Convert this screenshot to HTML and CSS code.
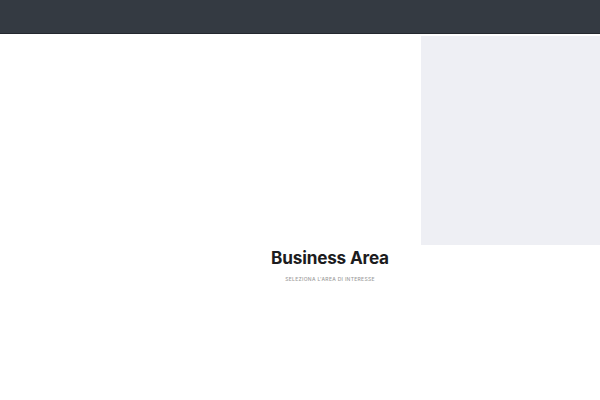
FILE: index.html
```html
<!DOCTYPE html>
<html lang="it">
<head>
<meta charset="utf-8">
<title>Business Area</title>
<link rel="stylesheet" href="styles.css">
</head>
<body>
<header class="topbar"></header>
<div class="hero-row">
  <div class="hero-panel"></div>
</div>
<section class="intro">
  <h1 class="intro-title">Business Area</h1>
  <p class="intro-sub">Seleziona l'area di interesse</p>
</section>
</body>
</html>
```
FILE: styles.css
```css
html, body {
  margin: 0;
  padding: 0;
  background: #ffffff;
  font-family: Inter, "Noto Sans", sans-serif;
}
.topbar {
  height: 33px;
  background: #343a42;
  border-bottom: 1px solid #24282e;
}
.hero-row {
  display: flex;
  justify-content: flex-end;
  padding-top: 2px;
}
.hero-panel {
  width: 179px;
  height: 209px;
  background: #eeeff4;
}
.intro {
  display: flex;
  flex-direction: column;
  align-items: center;
  padding-left: 60px;
}
.intro-title {
  margin: 0;
  padding-top: 1px;
  font-size: 17.2px;
  line-height: 23px;
  font-weight: 700;
  color: #1c1c1e;
  letter-spacing: -0.2px;
}
.intro-sub {
  margin: 6px 0 0;
  font-size: 5px;
  line-height: 8px;
  font-weight: 500;
  text-transform: uppercase;
  letter-spacing: 0.3px;
  color: #9c9c9c;
}
```
